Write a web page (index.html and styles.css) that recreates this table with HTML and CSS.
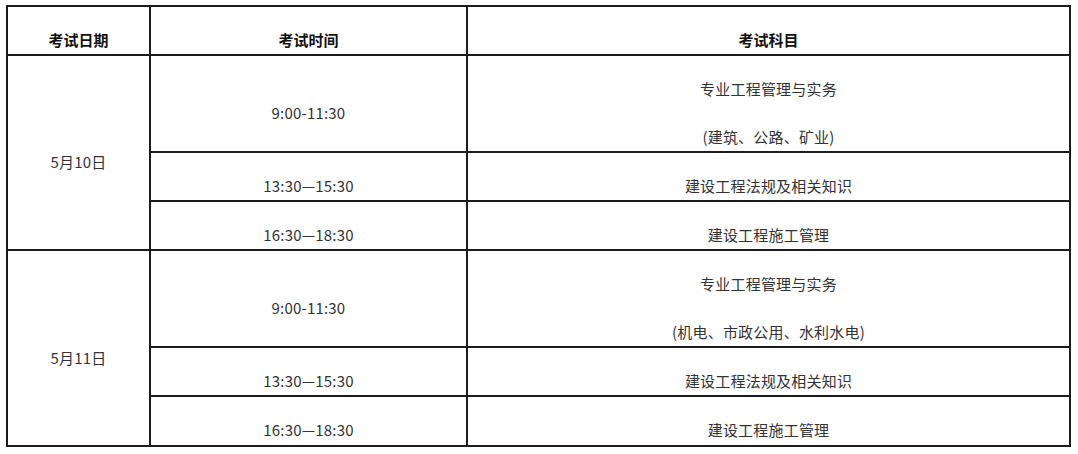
FILE: index.html
```html
<!DOCTYPE html>
<html lang="zh">
<head>
<meta charset="utf-8">
<title>考试时间安排</title>
<link rel="stylesheet" href="styles.css">
</head>
<body>
<table class="schedule">
  <colgroup>
    <col class="c-date">
    <col class="c-time">
    <col class="c-subj">
  </colgroup>
  <thead>
    <tr>
      <th><p>考试日期</p></th>
      <th><p>考试时间</p></th>
      <th><p>考试科目</p></th>
    </tr>
  </thead>
  <tbody>
    <tr>
      <td rowspan="3"><p>5月10日</p></td>
      <td><p>9:00-11:30</p></td>
      <td><p>专业工程管理与实务</p><p>(建筑、公路、矿业)</p></td>
    </tr>
    <tr>
      <td><p>13:30—15:30</p></td>
      <td><p>建设工程法规及相关知识</p></td>
    </tr>
    <tr>
      <td><p>16:30—18:30</p></td>
      <td><p>建设工程施工管理</p></td>
    </tr>
    <tr>
      <td rowspan="3"><p>5月11日</p></td>
      <td><p>9:00-11:30</p></td>
      <td><p>专业工程管理与实务</p><p>(机电、市政公用、水利水电)</p></td>
    </tr>
    <tr>
      <td><p>13:30—15:30</p></td>
      <td><p>建设工程法规及相关知识</p></td>
    </tr>
    <tr>
      <td><p>16:30—18:30</p></td>
      <td><p>建设工程施工管理</p></td>
    </tr>
  </tbody>
</table>
</body>
</html>
```
FILE: styles.css
```css
html, body {
  background: #fff;
}
body {
  margin: 5px 0 0 6px;
  font-family: "Noto Sans CJK SC", "Noto Sans", sans-serif;
  font-size: 15px;
  color: #333;
}
.schedule {
  border-collapse: collapse;
  width: 1063px;
  table-layout: fixed;
}
.c-date { width: 143px; }
.c-time { width: 317px; }
.c-subj { width: 603px; }
.schedule th,
.schedule td {
  border: 2px solid #1c1c1c;
  padding: 0 0 1px;
  text-align: center;
  vertical-align: middle;
}
.schedule th {
  font-weight: bold;
  color: #111;
}
.schedule p {
  margin: 20px 0 0;
  line-height: 26px;
}
.schedule p + p {
  margin-top: 22px;
}
.schedule tbody tr:last-child td {
  padding-bottom: 2px;
}
.schedule td p {
  letter-spacing: 0.2px;
}
```
